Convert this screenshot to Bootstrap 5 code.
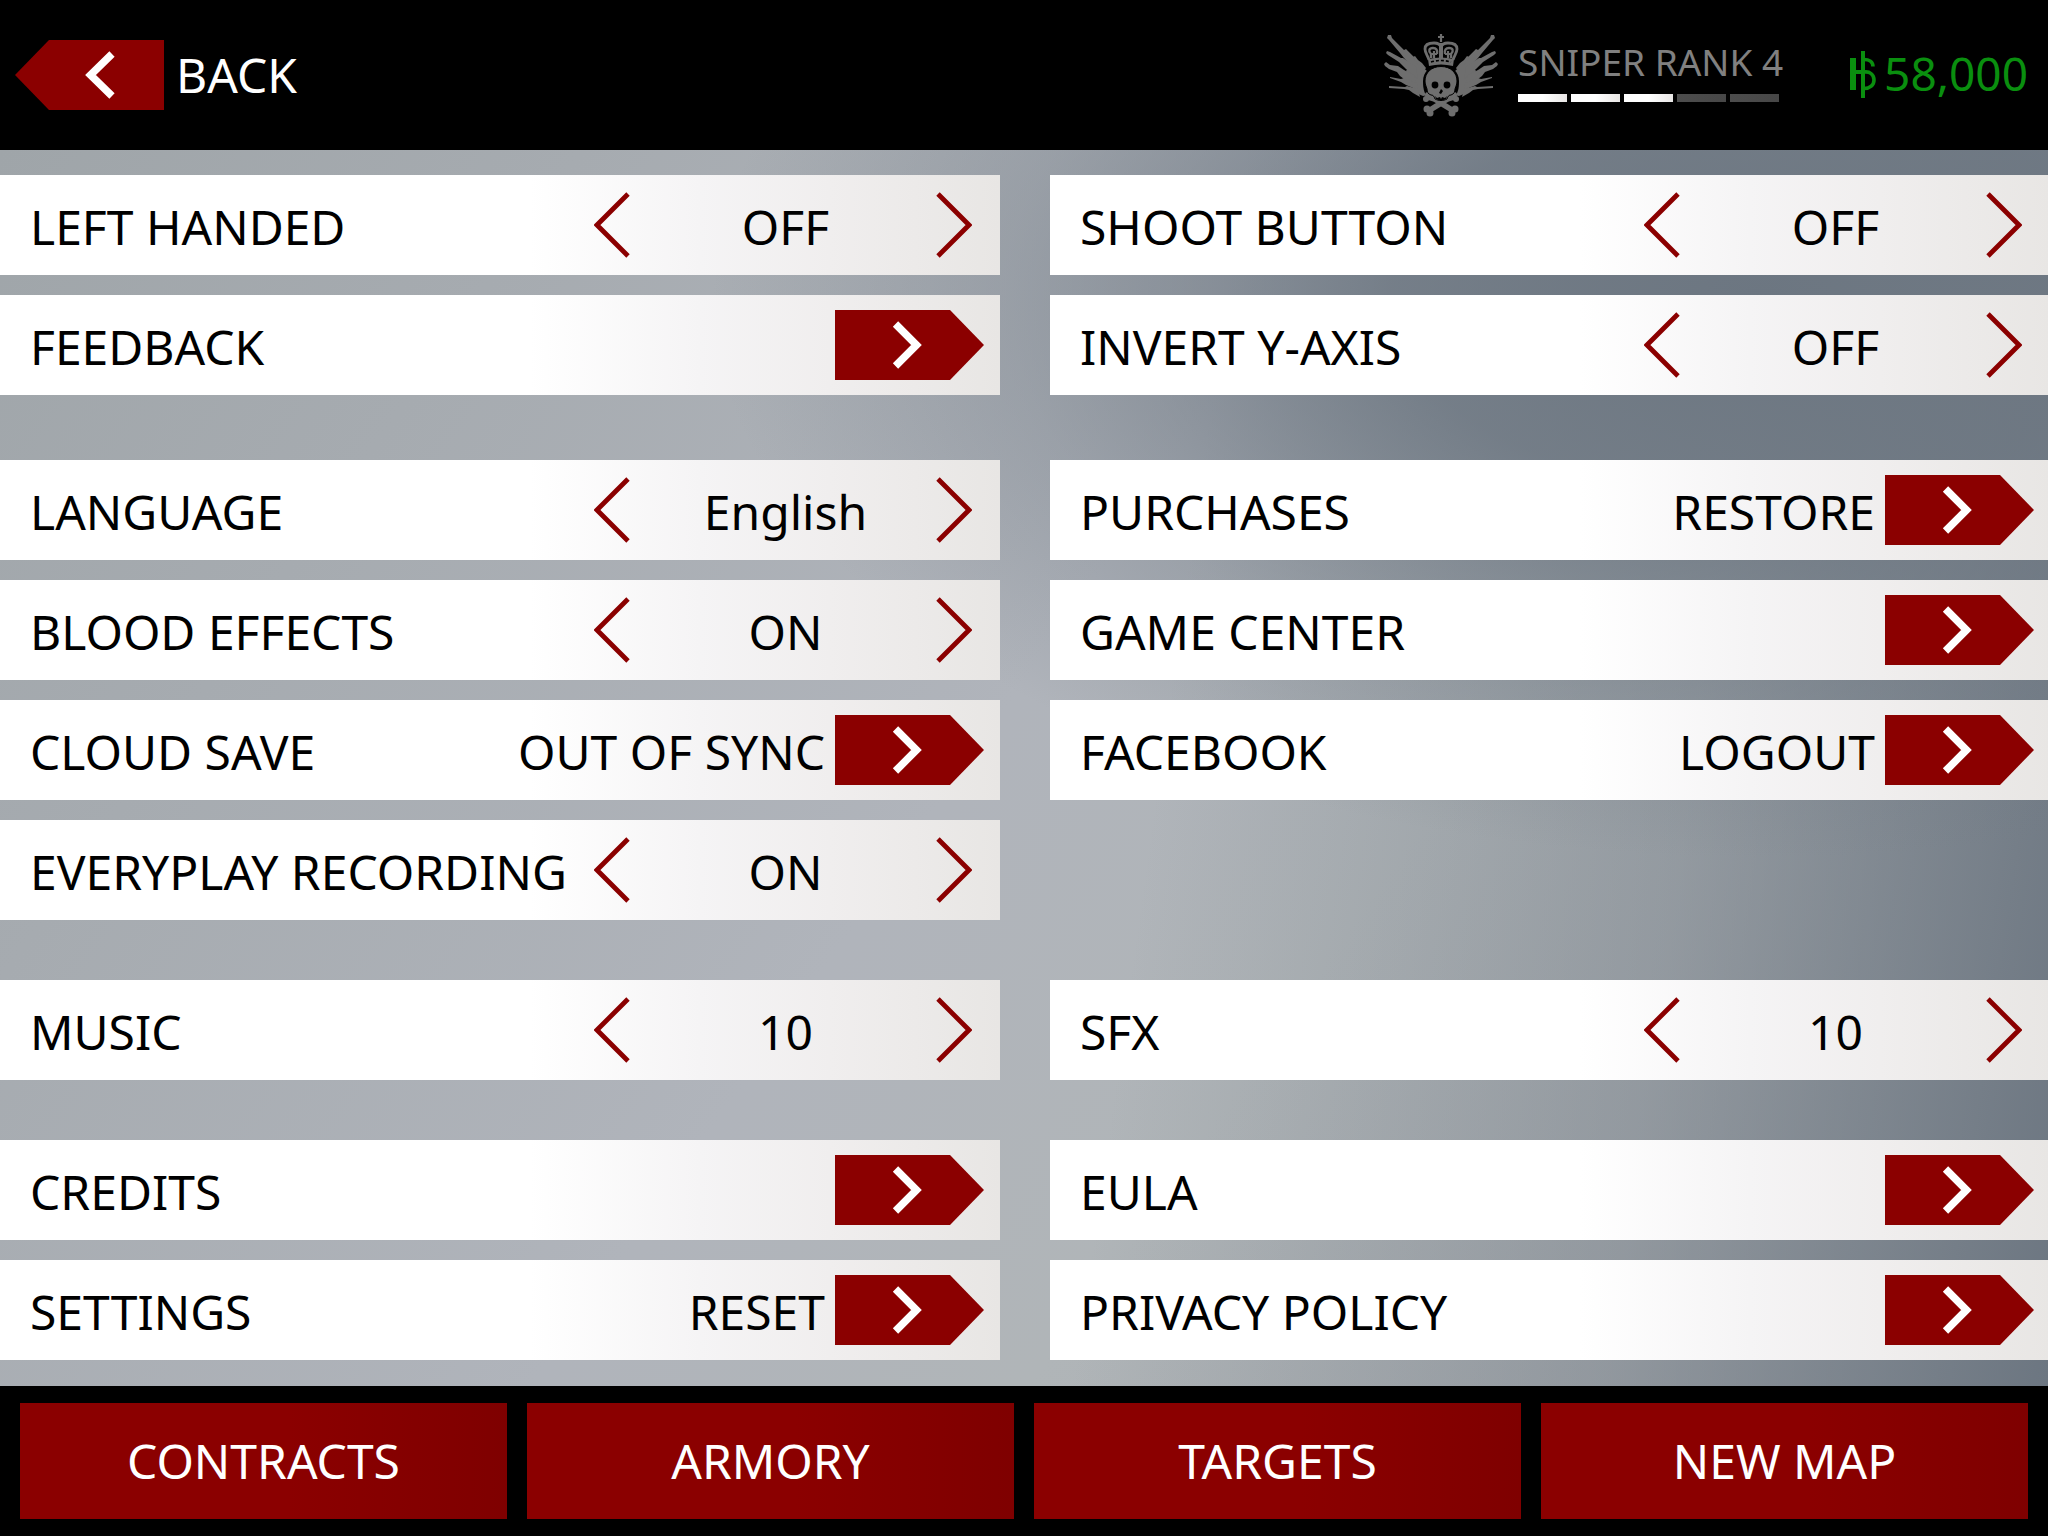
<!DOCTYPE html>
<html lang="en">
<head>
<meta charset="utf-8">
<meta name="viewport" content="width=device-width, initial-scale=1">
<title>Settings</title>
<link rel="stylesheet" href="https://cdn.jsdelivr.net/npm/bootstrap@5.3.0/dist/css/bootstrap.min.css">
<style>
  body {
    font-family: "Noto Sans", "Open Sans", sans-serif;
    font-size: 48px;
    line-height: 66px;
    color: #000;
    background: #000;
    overflow-x: hidden;
  }
  svg { display: block; }
  button { padding: 0; border: 0; background: none; color: inherit; font: inherit; }
  .topbar { height: 150px; padding: 0 20px 0 15px; background: #000; }
  .back-link { gap: 12px; color: #fff; }
  .rank-block { gap: 20px; margin-right: 67px; }
  .rank-info { padding-bottom: 12px; }
  .rank-name { font-size: 37px; line-height: 52px; margin-bottom: 6px; color: #808080; }
  .pips { gap: 4px; }
  .pip { width: 49px; height: 8px; background: linear-gradient(90deg, #4d4d4d, #474747); }
  .pip.earned { background: linear-gradient(90deg, #fff 50%, #e8e6e5); }
  .money { gap: 8px; font-size: 46px; color: #0a8f0f; }
  .money span { padding-bottom: 5px; }
  .backdrop {
    padding: 25px 0 26px;
    background:
      radial-gradient(ellipse 1050px 560px at 86% 12%, #6c7681 0%, rgba(108,118,129,.85) 35%, rgba(108,118,129,.3) 72%, rgba(108,118,129,0) 100%),
      linear-gradient(98deg, rgba(108,118,129,0) 56%, rgba(108,118,129,.4) 80%, #6c7681 100%),
      linear-gradient(125deg, #9fa5a9 0%, #a6abb0 20%, #b0b4bb 48%, #b0b5b8 65%, #a6a9ad 100%);
  }
  .settings { display: grid; grid-template-columns: 1fr 1fr; column-gap: 50px; margin-right: -2px; }
  .group { display: flex; flex-direction: column; gap: 20px; margin-bottom: 60px; }
  .group.first { margin-bottom: 65px; }
  .group.last { margin-bottom: 0; }
  .setting {
    display: flex; align-items: center; height: 100px; padding: 0 15px 0 30px;
    background: linear-gradient(90deg, #fff 53%, #f5f4f5 70%, #f0eeee 83%, #e8e6e4 100%);
  }
  .setting-name { flex: 1; white-space: nowrap; padding-top: 3px; }
  .setting-state { margin-right: 10px; padding-top: 3px; }
  .stepper { display: flex; align-items: center; justify-content: space-between; width: 378px; margin-right: 13px; }
  .stepper output { padding: 3px 0 0 5px; }
  .bottombar { display: grid; grid-template-columns: repeat(4, 1fr); gap: 20px; padding: 17px 20px; background: #000; }
  .tab-btn { height: 116px; color: #fff; text-align: center; background: linear-gradient(90deg, #8b0000 55%, #7f0000); }
</style>
<script src="https://cdn.jsdelivr.net/npm/bootstrap@5.3.0/dist/js/bootstrap.bundle.min.js"></script>
</head>
<body>
<svg class="d-none" aria-hidden="true">
  <symbol id="prev" viewBox="0 0 36 66"><path d="M34 2 3 33 34 64" fill="none" stroke="#8b0000" stroke-width="4.800"/></symbol>
  <symbol id="next" viewBox="0 0 36 66"><path d="M2 2 33 33 2 64" fill="none" stroke="#8b0000" stroke-width="4.800"/></symbol>
  <symbol id="go" viewBox="0 0 150 70"><path d="M0 0H115L149 35 115 70H0Z" fill="#8b0000"/><path d="M60.500 14 81.500 35 60.500 56" fill="none" stroke="#fff" stroke-width="7.500"/></symbol>
</svg>

<header class="topbar d-flex align-items-center justify-content-between">
  <a href="#" class="back-link d-flex align-items-center text-decoration-none">
    <svg width="149" height="70" viewBox="0 0 149 70"><path d="M149 0H34L0 35 34 70H149Z" fill="#8b0000"/><path d="M97 14 75.500 35 97 56" fill="none" stroke="#fff" stroke-width="7.500"/></svg>
    <span>BACK</span>
  </a>
  <div class="d-flex align-items-center">
    <div class="rank-block d-flex align-items-center">
      <svg width="114" height="84" viewBox="0 0 114 84" fill="#6e6e6e" role="img" aria-label="Sniper emblem">
        <!-- fan of rifles, mirrored left to right -->
        <g id="rifles">
          <path d="M3 5 4 2 7 2 8 5 20 17 22 16 31 25 33 29 43 38 44 62 39 63 32 60 30 58 28 50 24 44 22 38 26 32 20 25 16 20 5 7Z"/>
          <path d="M2 20 3 18 6 19 17 25 19 25 32 34 34 46 22 36 15 29 4 22Z"/>
          <path d="M0 31 2 29 6 32 14 33 20 37 30 42 34 54 24 49 16 43 13 39 5 36 1 33Z"/>
          <path d="M6 44 17 46 20 45 33 50 34 57 22 52 17 49 6 45Z"/>
          <path d="M5 53 21 54 23 53 34 56 36 64 29 60 25 57 20 56 5 55Z"/>
          <path d="M29 24 31 23 34 27 38 30 42 35 40 38 34 32Z"/>
        </g>
        <use href="#rifles" transform="matrix(-1 0 0 1 114 0)"/>
        <!-- dark outline that parts skull and bones from the rifles -->
        <path d="M57 32C46 32 39 39 39 48c0 7 1 11 3 14h30c2-3 3-7 3-14 0-9-7-16-18-16Z" fill="#000"/>
        <path d="M42 64 57 70 72 64M44 78 57 70 70 78" fill="none" stroke="#000" stroke-width="9"/>
        <!-- crown -->
        <g fill="none" stroke="#6e6e6e">
          <path d="M57 1V9M54 4H60" stroke-width="2.200"/>
          <path d="M45 27C44 23 41 20 41 16 41 11 46 10 50 10 53 10 56 11 57 14 58 11 61 10 64 10 68 10 73 11 73 16 73 20 70 23 69 27" stroke-width="2.800"/>
          <path d="M57 10V26" stroke-width="4"/>
          <path d="M47 25V21C44 18 45 15 49 15 52 15 54 17 53 21M67 25V21C70 18 69 15 65 15 62 15 60 17 61 21" stroke-width="2.400"/>
          <path d="M47 21H53M61 21H67M50 18V25M64 18V25" stroke-width="2.200"/>
        </g>
        <path d="M44 26Q57 23 70 26L69 33Q57 30 45 33Z"/>
        <path d="M47 29Q57 26 67 29" fill="none" stroke="#000" stroke-width="1.600" stroke-dasharray="3 2"/>
        <!-- crossbones -->
        <path d="M43 64C50 65 53 67 57 70 61 73 65 75 70 78M71 64C64 65 61 67 57 70 53 73 49 75 44 78" fill="none" stroke="#6e6e6e" stroke-width="5.500"/>
        <circle cx="42" cy="66" r="3"/><circle cx="44" cy="62" r="3"/>
        <circle cx="72" cy="66" r="3"/><circle cx="70" cy="62" r="3"/>
        <circle cx="43" cy="76" r="3.500"/><circle cx="46" cy="80" r="3.500"/>
        <circle cx="71" cy="76" r="3.500"/><circle cx="68" cy="80" r="3.500"/>
        <!-- skull -->
        <path d="M57 33.500C47 33.500 41 40 41 48c0 3 1 5 2 8 0 3 1 5 4 6 2 0 3 1 4 4 4 2 8 2 12 0 1-3 2-4 4-4 3-1 4-3 4-6 1-3 2-5 2-8 0-8-6-14.500-16-14.500Z" stroke="#000" stroke-width="1"/>
        <circle cx="51" cy="52" r="3.400" fill="#000"/><circle cx="63" cy="52" r="3.400" fill="#000"/>
        <path d="M57 56 59 58 57 61 55 60ZM51 63 53 65 56 64 57 66 58 64 61 65 63 63 62 66 57 68 52 66Z" fill="#000"/>
      </svg>
      <div class="rank-info">
        <div class="rank-name">SNIPER RANK 4</div>
        <div class="pips d-flex"><span class="pip earned"></span><span class="pip earned"></span><span class="pip earned"></span><span class="pip"></span><span class="pip"></span></div>
      </div>
    </div>
    <div class="money d-flex align-items-center">
      <svg width="26" height="48" viewBox="0 0 26 48"><path d="M0 7h6v32H0ZM6 19h6v4H6ZM11 0h4v47h-4Z" fill="#0a8f0f"/><path d="M14 8.500C19 8.500 23 11 23 15.500M14 21C20 20 24 24 24 29 24 34 20 37.500 14 37.500" fill="none" stroke="#0a8f0f" stroke-width="3.600"/></svg>
      <span>58,000</span>
    </div>
  </div>
</header>

<main class="backdrop">
  <div class="settings" id="settings"></div>
</main>

<nav class="bottombar">
  <button class="tab-btn" type="button">CONTRACTS</button>
  <button class="tab-btn" type="button">ARMORY</button>
  <button class="tab-btn" type="button">TARGETS</button>
  <button class="tab-btn" type="button">NEW MAP</button>
</nav>
<script>
  const step = (name, value) => `<div class="setting"><span class="setting-name">${name}</span><div class="stepper"><button type="button" aria-label="Previous ${name}"><svg width="36" height="66"><use href="#prev"/></svg></button><output>${value}</output><button type="button" aria-label="Next ${name}"><svg width="36" height="66"><use href="#next"/></svg></button></div></div>`;
  const go = (name, state = "") => `<div class="setting"><span class="setting-name">${name}</span><span class="setting-state">${state}</span><button type="button" aria-label="Open ${name}"><svg width="150" height="70"><use href="#go"/></svg></button></div>`;
  const group = (rows, cls = "") => `<div class="group ${cls}">${rows.join("")}</div>`;
  document.getElementById("settings").innerHTML = [
    group([step("LEFT HANDED", "OFF"), go("FEEDBACK")], "first"),
    group([step("SHOOT BUTTON", "OFF"), step("INVERT Y-AXIS", "OFF")], "first"),
    group([step("LANGUAGE", "English"), step("BLOOD EFFECTS", "ON"), go("CLOUD SAVE", "OUT OF SYNC"), step("EVERYPLAY RECORDING", "ON")]),
    group([go("PURCHASES", "RESTORE"), go("GAME CENTER"), go("FACEBOOK", "LOGOUT")]),
    group([step("MUSIC", "10")]),
    group([step("SFX", "10")]),
    group([go("CREDITS"), go("SETTINGS", "RESET")], "last"),
    group([go("EULA"), go("PRIVACY POLICY")], "last")
  ].join("");
</script>
</body>
</html>
